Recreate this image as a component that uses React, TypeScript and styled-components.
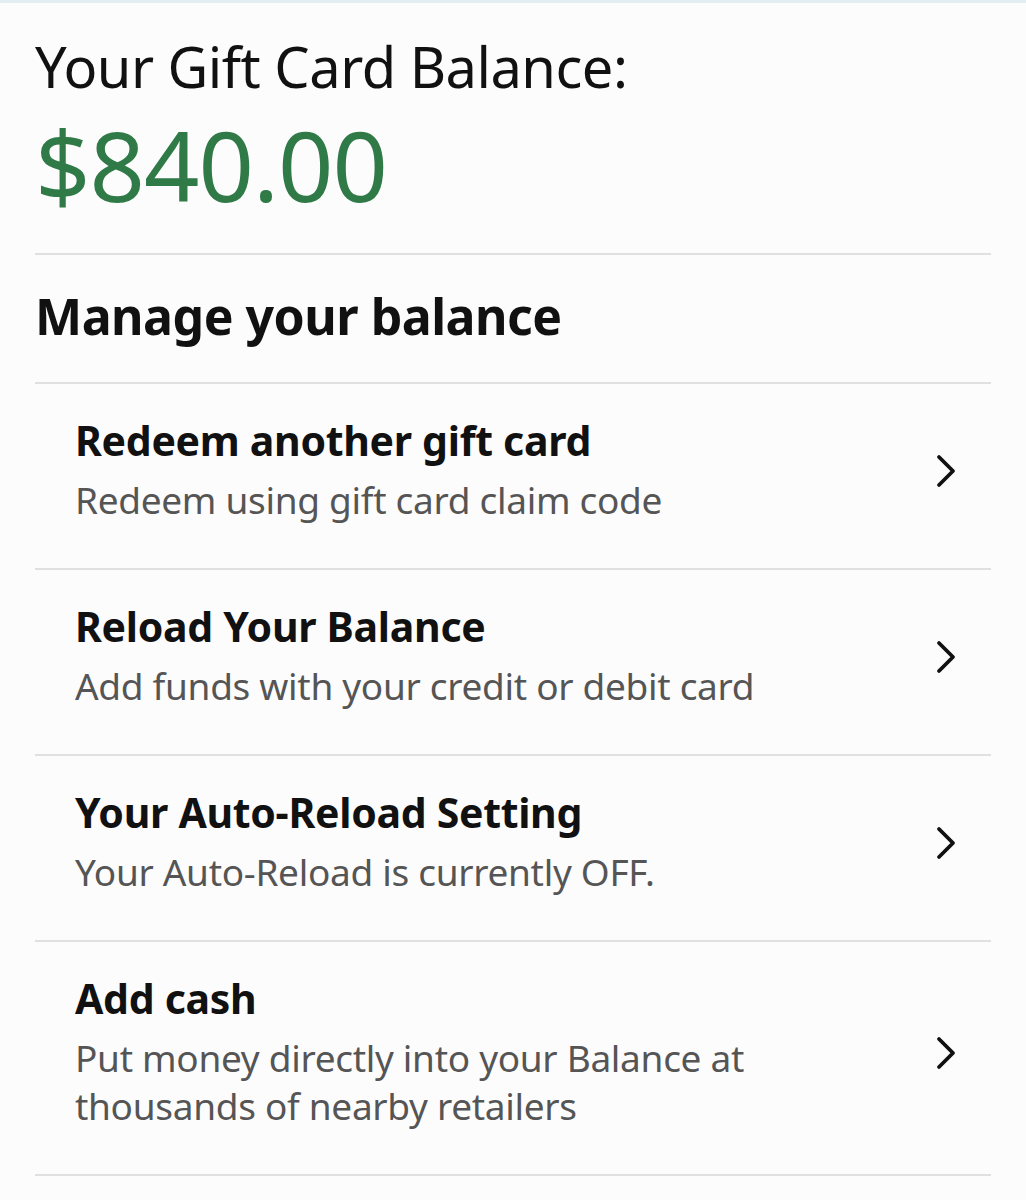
import styled, { createGlobalStyle } from "styled-components";

const GlobalStyle = createGlobalStyle`
  html, body {
    margin: 0;
    padding: 0;
    background: #fdfcfd;
  }
  body {
    font-family: "Noto Sans", "Open Sans", sans-serif;
    color: #111;
  }
`;

const Page = styled.div`
  width: 1026px;
  min-height: 1200px;
  box-sizing: border-box;
  border-top: 3px solid #e3eef3;
  padding: 0 35px;
`;

const BalanceBlock = styled.section`
  padding: 31px 0 33px;
  border-bottom: 2px solid #e0dfe1;
`;

const BalanceLabel = styled.div`
  font-size: 56px;
  line-height: 64px;
  margin-bottom: 10px;
  letter-spacing: -0.5px;
  color: #111;
`;

const BalanceAmount = styled.div`
  font-size: 97px;
  line-height: 112px;
  letter-spacing: -1px;
  color: #2f7a47;
`;

const SectionTitle = styled.h2`
  margin: 0;
  padding: 32px 0 37px;
  font-size: 50px;
  line-height: 58px;
  font-weight: 700;
  letter-spacing: -0.5px;
  border-bottom: 2px solid #e0dfe1;
`;

const Row = styled.a`
  display: flex;
  align-items: center;
  gap: 24px;
  padding: 30px 32px 44px 40px;
  border-bottom: 2px solid #e0dfe1;
  color: inherit;
  text-decoration: none;
`;

const RowText = styled.div`
  flex: 1;
  display: flex;
  flex-direction: column;
  gap: 10px;
`;

const RowTitle = styled.div`
  font-size: 41px;
  line-height: 52px;
  font-weight: 700;
  letter-spacing: -0.3px;
  color: #111;
`;

const RowDesc = styled.div`
  font-size: 37px;
  line-height: 48px;
  color: #555;
  letter-spacing: -0.3px;
  max-width: 760px;
`;

const ChevronWrap = styled.span`
  display: flex;
  margin-top: 4px;
`;

const Chevron = () => (
  <ChevronWrap>
    <svg width="26" height="34" viewBox="0 0 26 34" fill="none">
      <path d="M6 3 L20 17 L6 31" stroke="#111" strokeWidth="3.8" strokeLinecap="round" strokeLinejoin="round" />
    </svg>
  </ChevronWrap>
);

const items = [
  { title: "Redeem another gift card", desc: "Redeem using gift card claim code" },
  { title: "Reload Your Balance", desc: "Add funds with your credit or debit card" },
  { title: "Your Auto-Reload Setting", desc: "Your Auto-Reload is currently OFF." },
  { title: "Add cash", desc: "Put money directly into your Balance at thousands of nearby retailers" },
];

export default function App() {
  return (
    <>
      <GlobalStyle />
      <Page>
        <BalanceBlock>
          <BalanceLabel>Your Gift Card Balance:</BalanceLabel>
          <BalanceAmount>$840.00</BalanceAmount>
        </BalanceBlock>
        <SectionTitle>Manage your balance</SectionTitle>
        {items.map((it) => (
          <Row key={it.title} href="#">
            <RowText>
              <RowTitle>{it.title}</RowTitle>
              <RowDesc>{it.desc}</RowDesc>
            </RowText>
            <Chevron />
          </Row>
        ))}
      </Page>
    </>
  );
}
